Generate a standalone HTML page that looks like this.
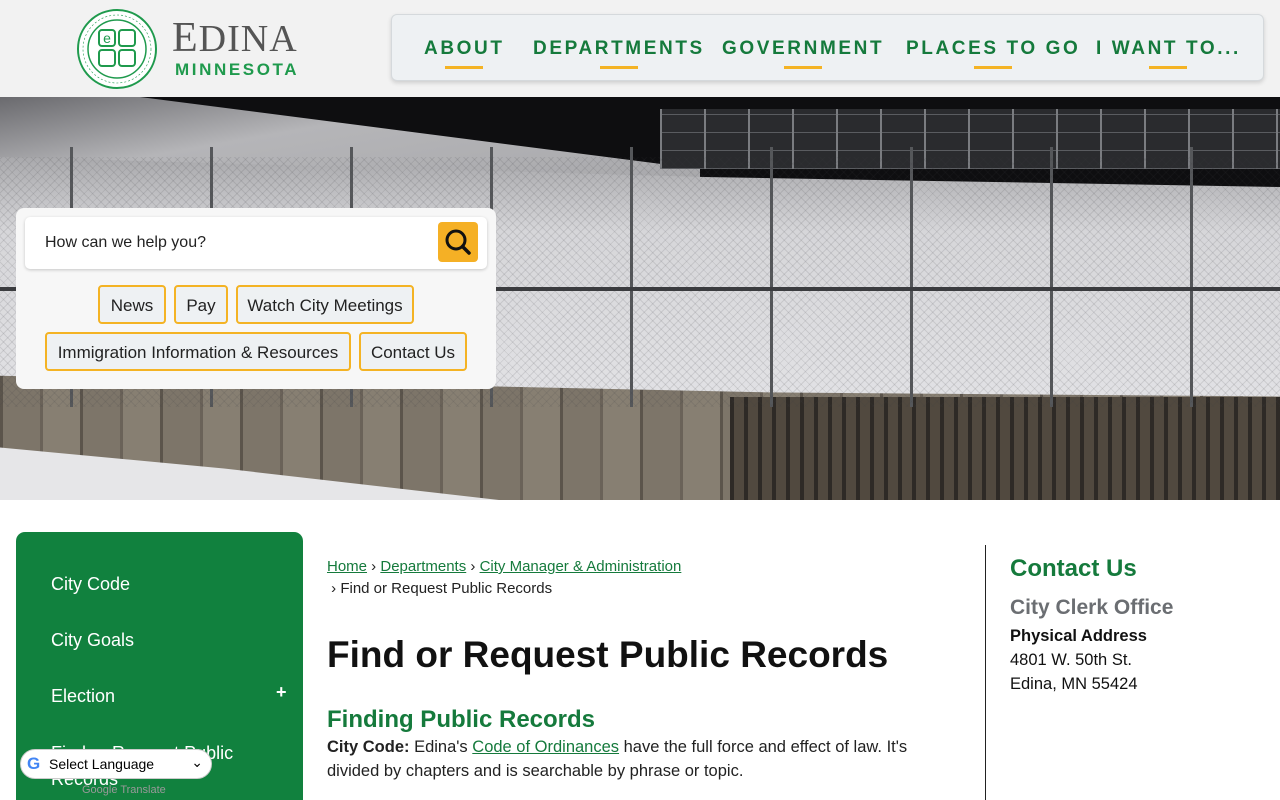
<!DOCTYPE html>
<html><head><meta charset="utf-8"><style>
*{margin:0;padding:0;box-sizing:border-box}
html,body{width:1280px;height:800px;overflow:hidden}
body{background:#fff;font-family:"Liberation Sans",sans-serif;position:relative}
.hdr{position:absolute;left:0;top:0;width:1280px;height:97px;background:#f2f2f2}
.nav{position:absolute;left:391px;top:14px;width:873px;height:67px;background:#eef1f3;border:1px solid #d5d9dc;border-radius:6px;box-shadow:0 2px 4px rgba(0,0,0,.15)}
.nav span{position:absolute;top:23px;font-size:19px;font-weight:bold;letter-spacing:2.6px;color:#157a3c}
.nav span:after{content:"";position:absolute;left:50%;margin-left:-19px;bottom:-9px;width:38px;height:3px;background:#f4b324}
.hero{position:absolute;left:0;top:97px;width:1280px;height:403px;overflow:hidden;background:#0e0e10}
.abs{position:absolute}
.box{position:absolute;left:16px;top:208px;width:480px;height:181px;background:#f7f7f7;border-radius:8px}
.search{position:absolute;left:25px;top:217px;width:462px;height:52px;background:#fff;border-radius:5px;box-shadow:0 1px 3px rgba(0,0,0,.2);font-size:16px;color:#222;padding:17px 20px}
.sbtn{position:absolute;left:438px;top:222px;width:40px;height:40px;background:#f5b025;border-radius:4px}
.q{position:absolute;height:39px;border:2px solid #f4b324;border-radius:4px;background:#eef1f3;color:#222;padding:9px 0;text-align:center;font-size:17px}
.side{position:absolute;left:16px;top:532px;width:287px;height:280px;background:#11813e;border-radius:9px}
.side div{position:absolute;left:35px;color:#fff;font-size:18px}
a{color:#157a3c;text-decoration:underline}
</style></head><body>
<div class="hdr"></div>
<svg class="abs" style="left:76px;top:8px" width="82" height="82" viewBox="0 0 82 82">
<circle cx="41" cy="41" r="39" fill="#fff" stroke="#1f9a4d" stroke-width="2"/>
<circle cx="41" cy="41" r="29" fill="none" stroke="#1f9a4d" stroke-width="1.5"/>
<circle cx="41" cy="41" r="34" fill="none" stroke="#1f9a4d" stroke-width="0.6" stroke-dasharray="2 2"/>
<rect x="23" y="22" width="16" height="16" rx="3" fill="none" stroke="#1f9a4d" stroke-width="2"/>
<rect x="43" y="22" width="16" height="16" rx="3" fill="none" stroke="#1f9a4d" stroke-width="2"/>
<rect x="23" y="42" width="16" height="16" rx="3" fill="none" stroke="#1f9a4d" stroke-width="2"/>
<rect x="43" y="42" width="16" height="16" rx="3" fill="none" stroke="#1f9a4d" stroke-width="2"/>
<text x="31" y="35" font-size="14" text-anchor="middle" fill="#1f9a4d" font-family="Liberation Sans">e</text>
</svg>
<div class="abs" style="left:172px;top:16px;font-family:'Liberation Serif',serif;font-size:42px;color:#555;letter-spacing:1px;line-height:44px">E<span style="font-size:38px">DINA</span></div>
<div class="abs" style="left:175px;top:60px;font-weight:bold;font-size:17px;color:#1f9a4d;letter-spacing:2.6px">MINNESOTA</div>
<div class="nav">
<span style="left:32px">ABOUT</span><span style="left:141px">DEPARTMENTS</span><span style="left:330px">GOVERNMENT</span><span style="left:514px">PLACES TO GO</span><span style="left:704px">I WANT TO...</span>
</div>
<div class="hero">
<div class="abs" style="left:0;top:0;width:700px;height:90px;background:linear-gradient(170deg,#6a6a6e 0%,#b5b5b8 40%,#a8a8ab 100%);clip-path:polygon(0 0,20% 0,100% 80%,100% 100%,0 100%)"></div>
<div class="abs" style="left:0;top:60px;width:1280px;height:250px;background:linear-gradient(180deg,#a9a9ac 0%,#d6d6d9 30%,#e2e2e5 100%);clip-path:polygon(0 0,55% 8%,100% 12%,100% 100%,0 100%)"></div>
<div class="abs" style="left:660px;top:12px;width:620px;height:60px;background:repeating-linear-gradient(90deg,#7a7c80 0 2px,transparent 2px 44px),repeating-linear-gradient(0deg,#5a5c60 0 1px,#2a2b2e 1px 18px)"></div>
<div class="abs" style="left:0;top:265px;width:1280px;height:138px;background:repeating-linear-gradient(90deg,#5b544b 0 3px,#7d7569 3px 40px,#6a6258 40px 43px,#877f72 43px 80px);clip-path:polygon(0 10%,60% 22%,100% 25%,100% 100%,0 100%)"></div>
<div class="abs" style="left:730px;top:300px;width:550px;height:103px;background:repeating-linear-gradient(90deg,#2e2a26 0 4px,#51493f 4px 14px)"></div>
<div class="abs" style="left:0;top:340px;width:560px;height:70px;background:#e6e6e8;clip-path:polygon(0 15%,40% 45%,100% 100%,0 100%)"></div>
<div class="abs" style="left:0;top:50px;width:1280px;height:260px;background:repeating-linear-gradient(90deg,transparent 0 70px,#55575a 70px 73px,transparent 73px 140px)"></div>
<div class="abs" style="left:0;top:190px;width:1280px;height:4px;background:#3b3c3f"></div>
<div class="abs" style="left:0;top:60px;width:1280px;height:250px;background:repeating-linear-gradient(45deg,rgba(60,60,65,.12) 0 1px,transparent 1px 6px),repeating-linear-gradient(-45deg,rgba(60,60,65,.12) 0 1px,transparent 1px 6px)"></div>
</div>
<div class="box"></div>
<div class="search">How can we help you?</div>
<div class="sbtn"><svg width="40" height="40" viewBox="0 0 40 40"><circle cx="18" cy="18" r="9" fill="none" stroke="#111" stroke-width="3"/><path d="M24.5 24.5L31 31" stroke="#111" stroke-width="3.5" stroke-linecap="round"/></svg></div>
<div class="q" style="left:98px;top:285px;width:68px">News</div>
<div class="q" style="left:174px;top:285px;width:54px">Pay</div>
<div class="q" style="left:236px;top:285px;width:178px">Watch City Meetings</div>
<div class="q" style="left:45px;top:332px;width:306px">Immigration Information &amp; Resources</div>
<div class="q" style="left:359px;top:332px;width:108px">Contact Us</div>
<div class="side">
<div style="top:42px">City Code</div><div style="top:98px">City Goals</div><div style="top:154px">Election</div>
<div style="top:208px;line-height:26px">Find or Request Public<br>Records</div>
<div style="left:260px;top:150px;font-weight:bold">+</div>
</div>
<div class="abs" style="left:20px;top:749px;width:192px;height:30px;background:#fff;border:1px solid #ccc;border-radius:15px;font-size:14px;padding:6px 0 0 28px;color:#000">Select Language<span style="position:absolute;right:8px;top:4px">⌄</span>
<span style="position:absolute;left:6px;top:4px;font-weight:bold;color:#4285f4;font-size:17px">G</span></div>
<div class="abs" style="left:82px;top:784px;font-size:11px;color:#999">Google Translate</div>
<div class="abs" style="left:327px;top:556px;font-size:15px;color:#222;line-height:22px"><a>Home</a> › <a>Departments</a> › <a>City Manager &amp; Administration</a><br>&nbsp;› Find or Request Public Records</div>
<div class="abs" style="left:327px;top:634px;font-size:37px;font-weight:bold;color:#111">Find or Request Public Records</div>
<div class="abs" style="left:327px;top:706px;font-size:24px;font-weight:bold;color:#157a3c">Finding Public Records</div>
<div class="abs" style="left:327px;top:735px;width:600px;font-size:16.5px;line-height:24px;color:#222"><b>City Code:</b> Edina's <a>Code of Ordinances</a> have the full force and effect of law. It's divided by chapters and is searchable by phrase or topic.</div>
<div class="abs" style="left:985px;top:545px;width:1px;height:255px;background:#222"></div>
<div class="abs" style="left:1010px;top:555px;font-size:24px;font-weight:bold;color:#157a3c">Contact Us</div>
<div class="abs" style="left:1010px;top:596px;font-size:21px;font-weight:bold;color:#6b6e72">City Clerk Office</div>
<div class="abs" style="left:1010px;top:624px;font-size:16.5px;line-height:24px;color:#111"><b>Physical Address</b><br>4801 W. 50th St.<br>Edina, MN 55424</div>
</body></html>
